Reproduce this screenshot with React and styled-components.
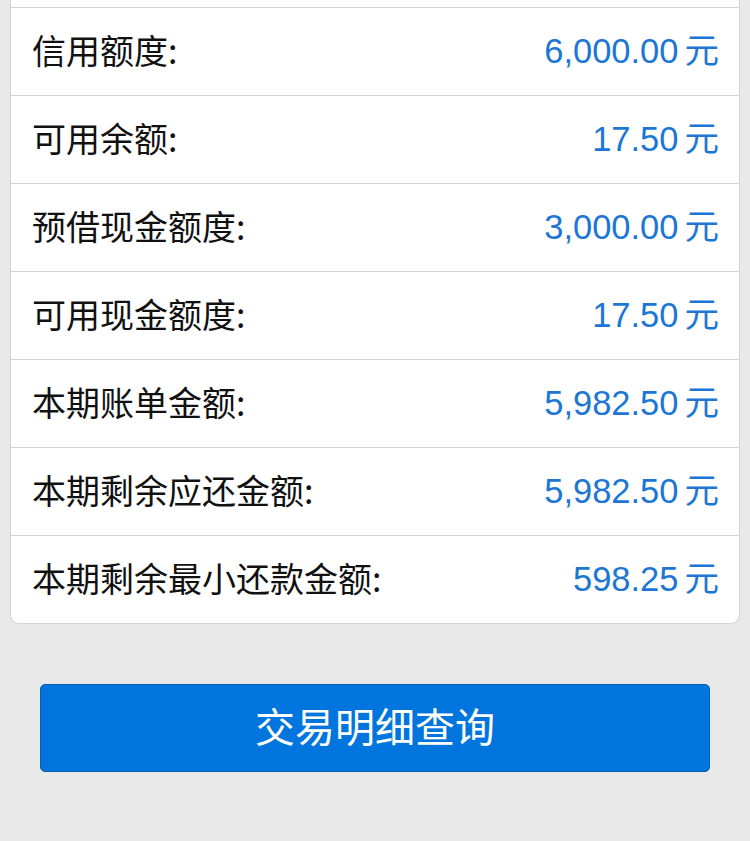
import React from "react";
import styled, { createGlobalStyle } from "styled-components";

const rows = [
  { label: "信用额度:", value: "6,000.00" },
  { label: "可用余额:", value: "17.50" },
  { label: "预借现金额度:", value: "3,000.00" },
  { label: "可用现金额度:", value: "17.50" },
  { label: "本期账单金额:", value: "5,982.50" },
  { label: "本期剩余应还金额:", value: "5,982.50" },
  { label: "本期剩余最小还款金额:", value: "598.25" },
];

const cjk = '"Noto Sans CJK SC", "Noto Sans", sans-serif';
const numFont = '"Liberation Sans", "Noto Sans CJK SC", sans-serif';
const blue = '#1c76d4';
const line = '#d3d3d3';

const GlobalStyle = createGlobalStyle`
  body {
    margin: 0;
    background: #e9e9e9;
    font-family: ${cjk};
  }
`;

const Page = styled.div`
  width: 750px;
  height: 841px;
  overflow: hidden;
  background: #e9e9e9;
`;

const Card = styled.div`
  margin: 0 10px;
  padding-top: 7px;
  background: #fff;
  border: 1px solid ${line};
  border-top: none;
  border-radius: 0 0 9px 9px;
`;

const Row = styled.div`
  box-sizing: border-box;
  height: 88px;
  display: flex;
  align-items: center;
  justify-content: space-between;
  padding: 0 20px 3px 21px;
  border-top: 1px solid ${line};
`;

const Label = styled.span`
  font-family: ${cjk};
  font-size: 34px;
  color: #111;
  line-height: 1;
`;

const Value = styled.span`
  font-family: ${numFont};
  font-size: 34.5px;
  color: ${blue};
  line-height: 1;
`;

const Unit = styled.span`
  font-family: ${cjk};
  margin-left: 6px;
`;

const Button = styled.button`
  display: block;
  box-sizing: border-box;
  margin: 60px 40px 0;
  width: 670px;
  height: 88px;
  padding: 0 0 6px;
  background: #0075de;
  border: 1px solid #0a5fb0;
  border-radius: 5px;
  color: #fff;
  font-family: ${cjk};
  font-size: 40px;
  cursor: pointer;
`;

function App() {
  return (
    <Page>
      <GlobalStyle />
      <Card>
        {rows.map((r) => (
          <Row key={r.label}>
            <Label>{r.label}</Label>
            <Value>
              {r.value}
              <Unit>元</Unit>
            </Value>
          </Row>
        ))}
      </Card>
      <Button>交易明细查询</Button>
    </Page>
  );
}

export default App;
